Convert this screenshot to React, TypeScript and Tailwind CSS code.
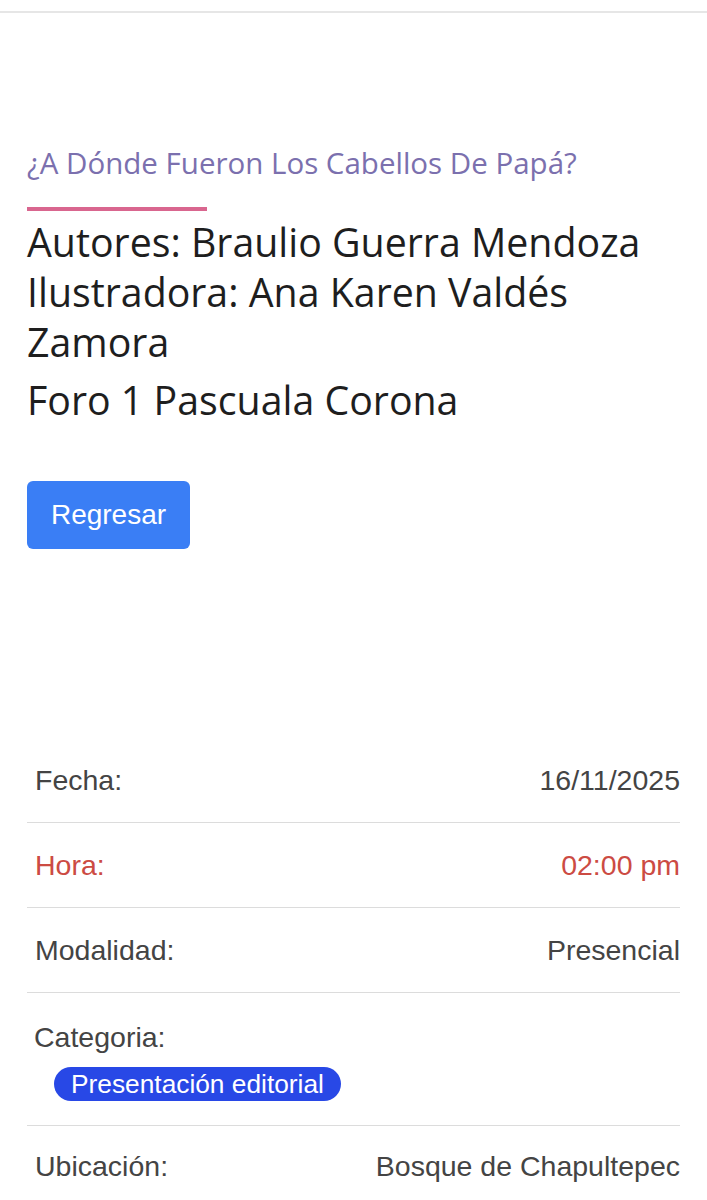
export default function App() {
  const rows = [
    { label: "Fecha:", value: "16/11/2025", red: false },
    { label: "Hora:", value: "02:00 pm", red: true },
    { label: "Modalidad:", value: "Presencial", red: false },
  ];
  return (
    <div className="min-h-[1200px] bg-white">
      <div className="h-[11px]" />
      <div className="h-[2px] bg-[#e6e6e6]" />
      <div className="px-[27px]">
        <div className="pt-[131px] text-[29.5px] leading-[38px] text-[#7b70ae] [font-family:'Open_Sans',sans-serif]">
          ¿A Dónde Fueron Los Cabellos De Papá?
        </div>
        <div className="mt-[25px] h-[4px] w-[180px] bg-[#d9668f]" />
        <div className="mt-[6px] text-[39.3px] leading-[50px] text-[#1e1e1e] [font-family:'Open_Sans',sans-serif]">
          <p>Autores: Braulio Guerra Mendoza</p>
          <p>Ilustradora: Ana Karen Valdés Zamora</p>
          <p className="mt-[8px]">Foro 1 Pascuala Corona</p>
        </div>
        <button className="mt-[56px] flex h-[68px] w-[163px] items-center justify-center rounded-[6px] bg-[#3a7ef5] text-[28px] text-white [font-family:'Liberation_Sans',sans-serif]">
          Regresar
        </button>
        <div className="mt-[189px] [font-family:'Liberation_Sans',sans-serif] text-[28.5px] leading-[30px] text-[#444]">
          {rows.map((r) => (
            <div
              key={r.label}
              className={`flex justify-between border-b border-[#dcdcdc] py-[27px] pl-[8px] ${r.red ? "text-[#cc4b43]" : ""}`}
            >
              <span>{r.label}</span>
              <span>{r.value}</span>
            </div>
          ))}
          <div className="border-b border-[#dcdcdc] pb-[24px] pl-[7px] pt-[29px]">
            <div>Categoria:</div>
            <div className="mt-[15px] pl-[20px]">
              <span className="inline-flex h-[34px] items-center rounded-full bg-[#2848e6] px-[17px] text-[26.3px] text-white">
                Presentación editorial
              </span>
            </div>
          </div>
          <div className="flex justify-between py-[25px] pl-[8px]">
            <span>Ubicación:</span>
            <span>Bosque de Chapultepec</span>
          </div>
        </div>
      </div>
    </div>
  );
}
